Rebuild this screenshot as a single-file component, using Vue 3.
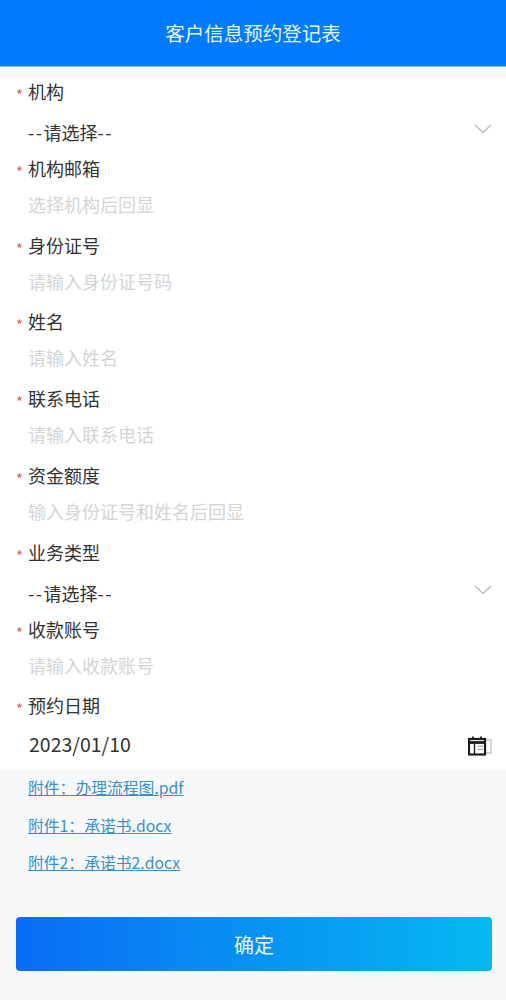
<script setup>
const fields = [
  { label: "机构", value: "请选择", type: "select" },
  { label: "机构邮箱", placeholder: "选择机构后回显" },
  { label: "身份证号", placeholder: "请输入身份证号码" },
  { label: "姓名", placeholder: "请输入姓名" },
  { label: "联系电话", placeholder: "请输入联系电话" },
  { label: "资金额度", placeholder: "输入身份证号和姓名后回显" },
  { label: "业务类型", value: "请选择", type: "select" },
  { label: "收款账号", placeholder: "请输入收款账号" },
  { label: "预约日期", value: "2023/01/10", type: "date" },
];

const files = ["附件：办理流程图.pdf", "附件1：承诺书.docx", "附件2：承诺书2.docx"];
</script>

<template>
  <div class="page">
    <header class="top">客户信息预约登记表</header>
    <form class="form" @submit.prevent>
      <div v-for="item in fields" :key="item.label" class="field">
        <div class="label"><i class="star">*</i>{{ item.label }}</div>
        <div :class="['control', item.type || 'text']">
          <span v-if="item.type === 'select'" class="value"><b class="dash">--</b>{{ item.value }}<b class="dash">--</b></span>
          <span v-else-if="item.value" class="value">{{ item.value }}</span>
          <span v-else class="placeholder">{{ item.placeholder }}</span>
          <svg v-if="item.type === 'select'" class="arrow" width="20" height="12" viewBox="0 0 20 12">
            <path d="M2 2l8 7.5L18 2" fill="none" stroke="#bdbdbd" stroke-width="1.6" />
          </svg>
          <svg v-if="item.type === 'date'" class="cal" width="24" height="20" viewBox="0 0 24 20">
            <path d="M17 4h6v13h-6" fill="none" stroke="#c4c4c4" stroke-width="1.3" />
            <rect x="1" y="3" width="16" height="15.5" fill="none" stroke="#1c1c1c" stroke-width="2.2" />
            <path d="M1 6.5h16" stroke="#1c1c1c" stroke-width="2.8" />
            <path d="M5 0.5v3M13 0.5v3" stroke="#1c1c1c" stroke-width="1.8" />
            <path d="M6.5 7v11" stroke="#1c1c1c" stroke-width="1.4" />
            <path d="M10 10h5M10 13.5h5" stroke="#9a9a9a" stroke-width="1.2" />
          </svg>
        </div>
      </div>
    </form>
    <div class="files">
      <a v-for="name in files" :key="name" class="file" href="#">{{ name }}</a>
    </div>
    <div class="actions">
      <button class="submit" type="button">确定</button>
    </div>
  </div>
</template>

<style scoped>
.page {
  height: 1000px;
  overflow: hidden;
  background: #f7f8f9;
  font-family: "Noto Sans CJK SC", "Noto Sans", sans-serif;
  color: #333;
}

.top {
  height: 67px;
  line-height: 66px;
  text-align: center;
  font-size: 19.5px;
  color: #e8f6ff;
  background: #007bfd;
  border-bottom: 1px solid #7cc4fb;
  box-sizing: border-box;
}

.form {
  margin-top: 11px;
  padding-left: 16px;
  padding-right: 14px;
  background: #fff;
  height: 692px;
  box-sizing: border-box;
}

.field {
  height: 76.8px;
}

.label {
  height: 26px;
  line-height: 26px;
  font-size: 18px;
  color: #333;
}

.star {
  display: inline-block;
  width: 12px;
  font-style: normal;
  font-size: 15px;
  line-height: 1;
  vertical-align: -2px;
  color: #d9625e;
}

.control {
  position: relative;
  height: 50.8px;
  box-sizing: border-box;
  padding-left: 12px;
  font-size: 18px;
  line-height: 26px;
}

.text {
  padding-top: 10px;
}

.select {
  padding-top: 15px;
}

.date {
  padding-top: 13px;
}

.date .value {
  font-size: 19.5px;
  margin-left: 1px;
}

.dash {
  font-weight: normal;
  letter-spacing: 1.5px;
}

.value {
  color: #333;
}

.placeholder {
  color: #d4d4d4;
}

.arrow {
  position: absolute;
  right: -1px;
  top: 19px;
}

.cal {
  position: absolute;
  right: 0;
  top: 18px;
}

.files {
  padding: 6px 0 0 28px;
  height: 147px;
  box-sizing: border-box;
}

.file {
  display: block;
  height: 37.5px;
  line-height: 24px;
  font-size: 15.8px;
  color: #3a8fc9;
  text-decoration: underline;
}

.actions {
  padding: 0 14px 0 16px;
}

.submit {
  display: block;
  width: 100%;
  height: 54px;
  border: 0;
  border-radius: 4px;
  font: inherit;
  font-size: 20px;
  color: #eaf7ff;
  background: linear-gradient(90deg, #0a6cf5, #05b8f0);
}
</style>
